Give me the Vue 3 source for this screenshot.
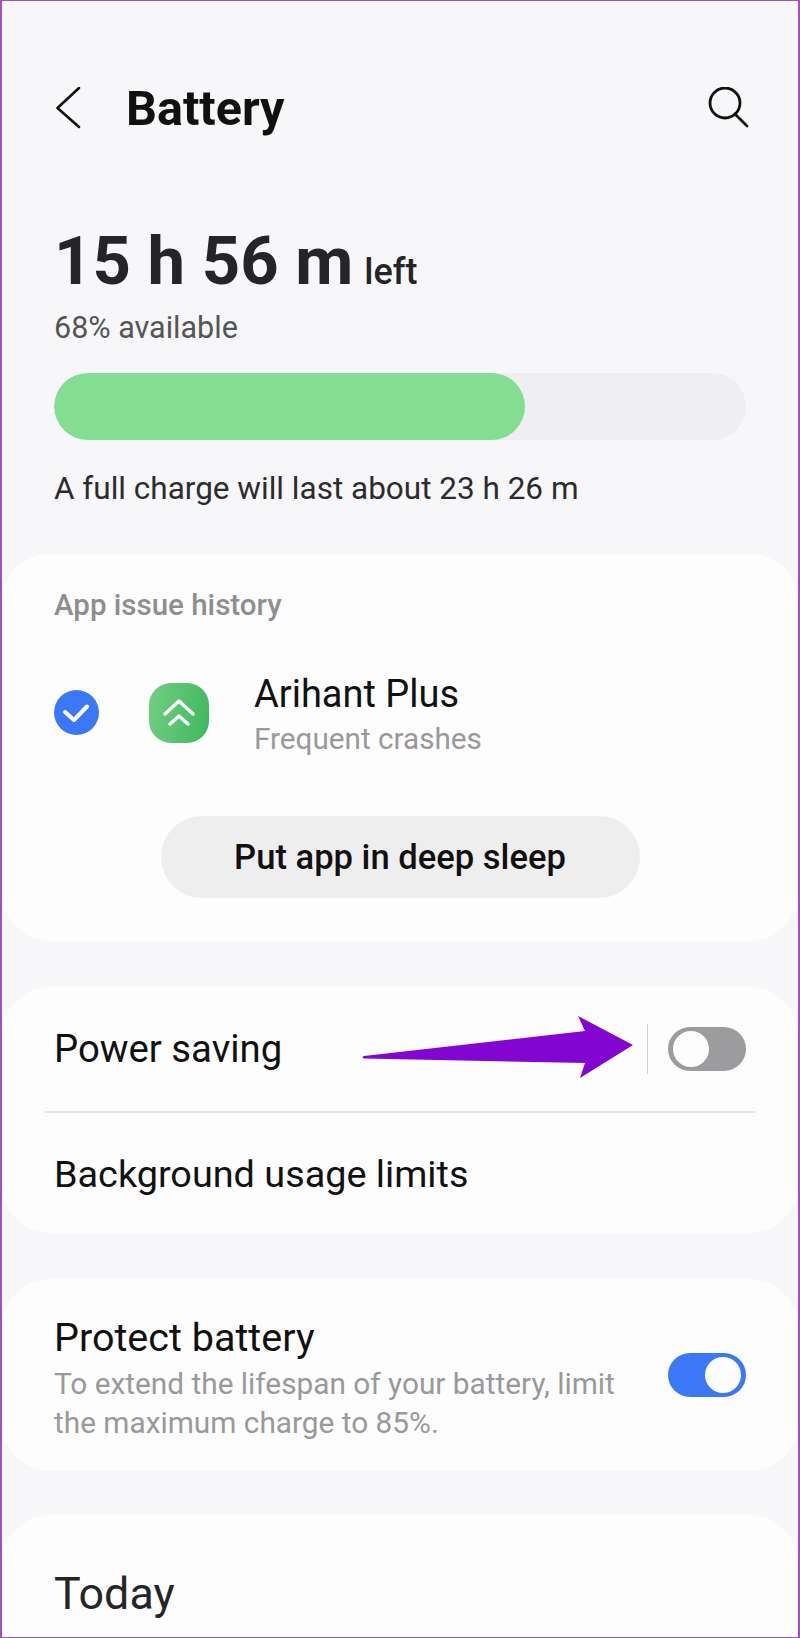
<template>
  <div class="page">
    <header class="topbar">
      <svg class="back" width="26" height="42" viewBox="0 0 26 42">
        <path d="M23 1 L1.500 21 L23 40" fill="none" stroke="#111" stroke-width="2.6" stroke-linecap="round" stroke-linejoin="round" />
      </svg>
      <h1 class="title">Battery</h1>
      <svg class="search" width="42" height="42" viewBox="0 0 42 42">
        <circle cx="18" cy="16" r="15" fill="none" stroke="#111" stroke-width="2.8" />
        <path d="M28 27 L40 39" fill="none" stroke="#111" stroke-width="2.8" stroke-linecap="round" />
      </svg>
    </header>

    <section class="summary">
      <div class="time"><span class="big">15 h 56 m</span><span class="left">left</span></div>
      <div class="avail">68% available</div>
      <div class="bar"><div class="fill" :style="{ width: level + '%' }"></div></div>
      <div class="full">A full charge will last about 23 h 26 m</div>
    </section>

    <section class="card issue">
      <div class="issue-head">App issue history</div>
      <div class="issue-row">
        <svg class="check" width="45" height="45" viewBox="0 0 45 45">
          <circle cx="22.5" cy="22.5" r="22.5" fill="#3a78f7" />
          <path d="M11 22 L20 30 L33 16.500" fill="none" stroke="#fff" stroke-width="4" stroke-linecap="round" stroke-linejoin="round" />
        </svg>
        <div class="app-icon">
          <svg width="32" height="28" viewBox="0 0 32 28">
            <path d="M2 15 L16 2 L30 15" fill="none" stroke="#fff" stroke-width="3.4" stroke-linecap="round" stroke-linejoin="round" />
            <path d="M7 25 L16 17 L25 25" fill="none" stroke="#fff" stroke-width="3.4" stroke-linecap="round" stroke-linejoin="round" />
          </svg>
        </div>
        <div class="app-text">
          <div class="app-name">Arihant Plus</div>
          <div class="app-sub">Frequent crashes</div>
        </div>
      </div>
      <div class="btn-wrap"><button class="btn">Put app in deep sleep</button></div>
    </section>

    <section class="card power">
      <div class="row power-row">
        <span class="label">Power saving</span>
        <svg class="arrow" width="280" height="66" viewBox="0 0 280 66">
          <path d="M4 41 L225 16 L218 1 L273 30 L220 63 L225 48 L4 43.500 Q1 42 4 41 Z" fill="#8205d2" />
        </svg>
        <span class="vline"></span>
        <span class="toggle"><span class="knob"></span></span>
      </div>
      <div class="divider"></div>
      <div class="row usage-row"><span class="label usage-label">Background usage limits</span></div>
    </section>

    <section class="card protect">
      <div class="protect-text">
        <div class="label protect-label">Protect battery</div>
        <div class="desc">To extend the lifespan of your battery, limit the maximum charge to 85%.</div>
      </div>
      <span class="toggle on"><span class="knob"></span></span>
    </section>

    <section class="card today">
      <div class="today-label">Today</div>
    </section>
  </div>
</template>

<script setup>
const level = 68
</script>

<style scoped>
.page {
  width: 800px;
  height: 1638px;
  box-sizing: border-box;
  overflow: hidden;
  background: #f7f7f9;
  border: 1px solid #9c52bd;
  border-left-width: 2px;
  border-right-width: 2px;
  font-family: Roboto, Inter, sans-serif;
  color: #111;
}
.topbar {
  display: flex;
  align-items: center;
  height: 42px;
  margin-top: 86px;
  padding: 0 49px 0 54px;
}
.title {
  margin: 0 0 0 44px;
  font-size: 48.5px;
  font-weight: 700;
  flex: 1;
}
.summary {
  padding: 0 52px;
}
.time {
  margin-top: 94px;
  height: 76px;
  line-height: 76px;
  color: #252527;
  white-space: nowrap;
}
.big {
  font-size: 67px;
  font-weight: 700;
}
.left {
  margin-left: 11px;
  font-size: 36px;
  font-weight: 500;
}
.avail {
  margin-top: 12px;
  font-size: 30.5px;
  line-height: 34px;
  color: #555557;
}
.bar {
  margin-top: 28px;
  height: 67px;
  border-radius: 34px;
  background: #efeff1;
  overflow: hidden;
}
.fill {
  height: 100%;
  border-radius: 34px;
  background: #83de93;
}
.full {
  margin-top: 29px;
  font-size: 31.500px;
  line-height: 40px;
  color: #2c2c2e;
}
.card {
  background: #fdfdfe;
  border-radius: 48px;
  padding: 0 52px;
}
.issue {
  margin-top: 45px;
  height: 387px;
  box-sizing: border-box;
}
.issue-head {
  padding-top: 34px;
  font-size: 29.500px;
  line-height: 34px;
  font-weight: 500;
  color: #8e8e90;
}
.issue-row {
  display: flex;
  align-items: center;
  margin-top: 46px;
}
.app-icon {
  display: flex;
  align-items: center;
  justify-content: center;
  width: 60px;
  height: 60px;
  margin-left: 50px;
  border-radius: 22px;
  background: linear-gradient(100deg, #74ce84, #3db85c);
}
.app-text {
  margin-left: 45px;
  padding-top: 4px;
}
.app-name {
  font-size: 38px;
  line-height: 44px;
  color: #111;
}
.app-sub {
  font-size: 29.700px;
  line-height: 36px;
  margin-top: 5px;
  color: #99999b;
}
.btn-wrap {
  display: flex;
  justify-content: center;
  margin-top: 59px;
}
.btn {
  width: 479px;
  height: 82px;
  border: none;
  border-radius: 41px;
  background: #eeeeef;
  font-family: inherit;
  font-size: 34.600px;
  font-weight: 500;
  color: #111;
}
.power {
  position: relative;
  margin-top: 46px;
  height: 246px;
  padding: 0;
}
.row {
  display: flex;
  align-items: center;
  padding: 0 52px;
}
.power-row {
  height: 124px;
}
.usage-row {
  height: 122px;
}
.label {
  font-size: 38.300px;
  line-height: 44px;
  color: #111;
}
.usage-label {
  font-size: 37.800px;
}
.protect-label {
  font-size: 39.500px;
}
.arrow {
  position: absolute;
  left: 358px;
  top: 28px;
}
.vline {
  width: 1px;
  height: 50px;
  margin-left: auto;
  margin-right: 20px;
  background: #cfcfd1;
}
.divider {
  height: 2px;
  margin: 0 43px;
  background: #e5e5e7;
}
.toggle {
  position: relative;
  display: block;
  flex: none;
  width: 78px;
  height: 44px;
  border-radius: 22px;
  background: #9c9c9f;
}
.knob {
  position: absolute;
  top: 4px;
  left: 5px;
  width: 36px;
  height: 36px;
  border-radius: 50%;
  background: #fdfdfe;
}
.toggle.on {
  background: #3a78f7;
}
.toggle.on .knob {
  left: 37px;
}
.protect {
  display: flex;
  align-items: center;
  justify-content: space-between;
  margin-top: 46px;
  height: 192px;
  box-sizing: border-box;
}
.protect-text {
  width: 580px;
  padding-top: 8px;
}
.desc {
  margin-top: 4px;
  font-size: 29.800px;
  line-height: 39px;
  color: #99999b;
}
.today {
  margin-top: 44px;
  height: 200px;
}
.today-label {
  padding-top: 54px;
  font-size: 44.800px;
  line-height: 50px;
  color: #252527;
}
</style>

<style>
html, body {
  margin: 0;
  background: #f7f7f9;
}
</style>
